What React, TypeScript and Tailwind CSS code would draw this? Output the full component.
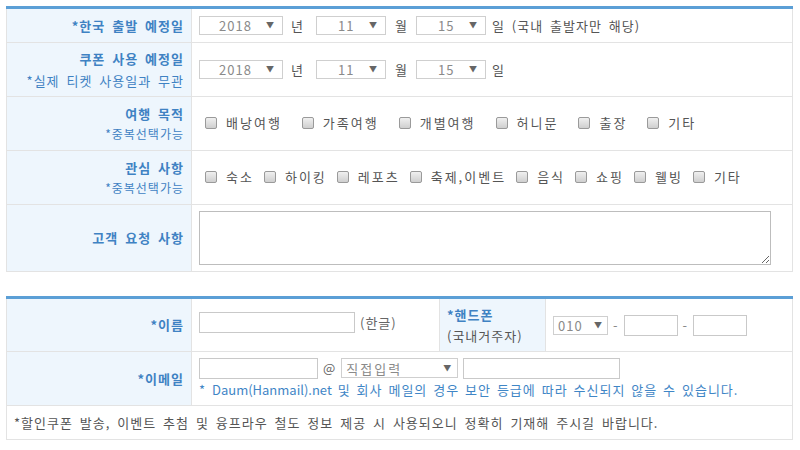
import React from 'react'

const font = { fontFamily: '"Noto Sans CJK KR", "Noto Sans", sans-serif' }

function Select({ value, w, pad }: { value: string; w: string; pad: string }) {
  return (
    <span className={`inline-flex items-center h-[19px] border border-[#cfcfcf] bg-white text-[#8a8a8a] text-[13px] leading-none ${w}`}>
      <span className={`flex-1 ${pad}`}>{value}</span>
      <span className="text-[8px] text-[#666] pr-[8px] tracking-normal">▼</span>
    </span>
  )
}

function Check({ label }: { label: string }) {
  return (
    <span className="inline-flex items-center">
      <span className="w-[12px] h-[12px] rounded-[2px] border border-[#9a9a9a] bg-gradient-to-b from-[#f0f0f0] to-[#cfcfcf] mr-[9px]" />
      <span className="tracking-[2px]">{label}</span>
    </span>
  )
}

const th = 'bg-[#eef6fd] border border-[#e3e3e3] align-middle text-[#3f82c3]'
const td = 'border border-[#e3e3e3] pl-[7px] align-middle text-[#555] text-[13px]'

export default function App() {
  return (
    <div className="w-[800px] h-[450px] bg-white pl-[6px] pt-[6px] tracking-[1px] [word-spacing:3px]" style={font}>
      <table className="w-[787px] border-collapse border-t-[3px] border-t-[#5b9fd6]">
        <colgroup>
          <col className="w-[185px]" />
          <col />
        </colgroup>
        <tbody>
          <tr className="h-[35px]">
            <th className={`${th} text-right pr-[7px] font-bold text-[13px]`}>*한국 출발 예정일</th>
            <td className={td}>
              <span className="inline-flex items-center">
                <Select value="2018" w="w-[84px]" pad="pl-[19px]" />
                <span className="ml-[8px] mr-[12px]">년</span>
                <Select value="11" w="w-[70px]" pad="pl-[21px]" />
                <span className="ml-[9px] mr-[8px]">월</span>
                <Select value="15" w="w-[70px]" pad="pl-[21px]" />
                <span className="ml-[6px]">일 (국내 출발자만 해당)</span>
              </span>
            </td>
          </tr>
          <tr className="h-[54px]">
            <th className={`${th} text-right pr-[7px] text-[13px] leading-[22px]`}>
              <div className="font-bold">쿠폰 사용 예정일</div>
              <div className="font-normal">*실제 티켓 사용일과 무관</div>
            </th>
            <td className={td}>
              <span className="inline-flex items-center">
                <Select value="2018" w="w-[84px]" pad="pl-[19px]" />
                <span className="ml-[8px] mr-[12px]">년</span>
                <Select value="11" w="w-[70px]" pad="pl-[21px]" />
                <span className="ml-[9px] mr-[8px]">월</span>
                <Select value="15" w="w-[70px]" pad="pl-[21px]" />
                <span className="ml-[6px]">일</span>
              </span>
            </td>
          </tr>
          <tr className="h-[54px]">
            <th className={`${th} text-right pr-[7px] text-[13px] leading-[20px]`}>
              <div className="font-bold">여행 목적</div>
              <div className="font-normal text-[12px]">*중복선택가능</div>
            </th>
            <td className={`${td} pl-[13px]`}>
              <span className="inline-flex items-center gap-[20px]">
                <Check label="배낭여행" />
                <Check label="가족여행" />
                <Check label="개별여행" />
                <Check label="허니문" />
                <Check label="출장" />
                <Check label="기타" />
              </span>
            </td>
          </tr>
          <tr className="h-[54px]">
            <th className={`${th} text-right pr-[7px] text-[13px] leading-[20px]`}>
              <div className="font-bold">관심 사항</div>
              <div className="font-normal text-[12px]">*중복선택가능</div>
            </th>
            <td className={`${td} pl-[13px]`}>
              <span className="inline-flex items-center gap-[10px]">
                <Check label="숙소" />
                <Check label="하이킹" />
                <Check label="레포츠" />
                <Check label="축제,이벤트" />
                <Check label="음식" />
                <Check label="쇼핑" />
                <Check label="웰빙" />
                <Check label="기타" />
              </span>
            </td>
          </tr>
          <tr className="h-[67px]">
            <th className={`${th} text-right pr-[7px] font-bold text-[13px]`}>고객 요청 사항</th>
            <td className={td}>
              <textarea className="block w-[572px] h-[54px] border border-[#bdbdbd] resize-y" />
            </td>
          </tr>
        </tbody>
      </table>

      <table className="w-[787px] mt-[24px] border-collapse border-t-[3px] border-t-[#5b9fd6]">
        <colgroup>
          <col className="w-[185px]" />
          <col className="w-[248px]" />
          <col className="w-[106px]" />
          <col />
        </colgroup>
        <tbody>
          <tr className="h-[54px]">
            <th className={`${th} text-right pr-[7px] font-bold text-[13px]`}>*이름</th>
            <td className={td}>
              <span className="inline-flex items-center">
                <span className="w-[156px] h-[21px] border border-[#c9c9c9] bg-white" />
                <span className="ml-[5px] text-[#666]">(한글)</span>
              </span>
            </td>
            <th className={`${th} text-left pl-[7px] text-[13px] leading-[21px]`}>
              <div className="font-bold">*핸드폰</div>
              <div className="font-normal text-[#555]">(국내거주자)</div>
            </th>
            <td className={td}>
              <span className="inline-flex items-center text-[#888]">
                <span className="inline-flex items-center h-[19px] w-[55px] border border-[#cfcfcf] text-[#8a8a8a] leading-none">
                  <span className="flex-1 pl-[4px]">010</span>
                  <span className="text-[8px] text-[#666] pr-[5px] tracking-normal">▼</span>
                </span>
                <span className="mx-[5px]">-</span>
                <span className="w-[54px] h-[21px] border border-[#c9c9c9]" />
                <span className="mx-[5px]">-</span>
                <span className="w-[54px] h-[21px] border border-[#c9c9c9]" />
              </span>
            </td>
          </tr>
          <tr className="h-[54px]">
            <th className={`${th} text-right pr-[7px] font-bold text-[13px]`}>*이메일</th>
            <td className={`${td} leading-[20px]`} colSpan={3}>
              <div className="flex items-center">
                <span className="w-[119px] h-[21px] border border-[#c9c9c9]" />
                <span className="mx-[5px] text-[#666]">@</span>
                <span className="inline-flex items-center h-[20px] w-[117px] border border-[#cfcfcf] text-[#8a8a8a] leading-none tracking-[2px]">
                  <span className="flex-1 pl-[4px]">직접입력</span>
                  <span className="text-[8px] text-[#666] pr-[6px] tracking-normal">▼</span>
                </span>
                <span className="ml-[5px] w-[157px] h-[21px] border border-[#c9c9c9]" />
              </div>
              <div className="text-[#3f86c6] mt-[1px] [word-spacing:2px]">* <span className="tracking-normal [word-spacing:0px]">Daum(Hanmail).net</span> 및 회사 메일의 경우 보안 등급에 따라 수신되지 않을 수 있습니다.</div>
            </td>
          </tr>
          <tr className="h-[34px]">
            <td className={`${td} pl-[5px] text-[#555]`} colSpan={4}>
              *할인쿠폰 발송, 이벤트 추첨 및 융프라우 철도 정보 제공 시 사용되오니 정확히 기재해 주시길 바랍니다.
            </td>
          </tr>
        </tbody>
      </table>
    </div>
  )
}
